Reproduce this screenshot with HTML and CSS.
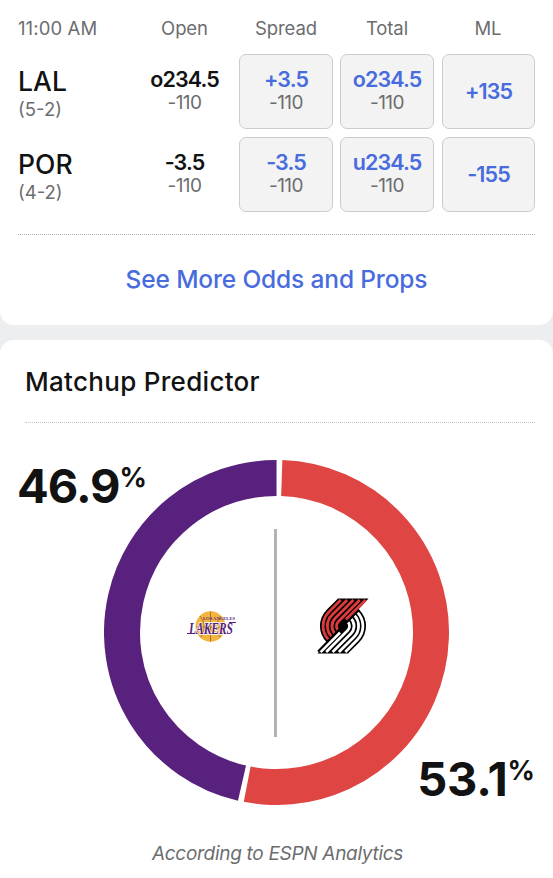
FILE: index.html
```html
<!doctype html>
<html lang="en">
<head>
<meta charset="utf-8">
<title>Matchup Predictor</title>
<link rel="stylesheet" href="styles.css">
</head>

<body>
<div class="card odds">
	<div class="odds_grid">
		<div class="head time">11:00 AM</div>
		<div class="head">Open</div>
		<div class="head">Spread</div>
		<div class="head">Total</div>
		<div class="head">ML</div>

		<div class="team"><b>LAL</b><span>(5-2)</span></div>
		<div class="cell"><b>o234.5</b><span>-110</span></div>
		<div class="cell btn"><b>+3.5</b><span>-110</span></div>
		<div class="cell btn"><b>o234.5</b><span>-110</span></div>
		<div class="cell btn ml"><b>+135</b></div>

		<div class="team"><b>POR</b><span>(4-2)</span></div>
		<div class="cell"><b>-3.5</b><span>-110</span></div>
		<div class="cell btn"><b>-3.5</b><span>-110</span></div>
		<div class="cell btn"><b>u234.5</b><span>-110</span></div>
		<div class="cell btn ml"><b>-155</b></div>
	</div>
	<a class="more">See More Odds and Props</a>
</div>

<div class="card predictor">
	<h2>Matchup Predictor</h2>
	<div class="chart">
		<svg class="ring" viewBox="0 0 345 345">
			<circle class="home" cx="172.5" cy="172.5" r="154.5" pathLength="360" stroke-dasharray="189 171" transform="rotate(-88.05 172.5 172.5)"/>
			<circle class="away" cx="172.5" cy="172.5" r="154.5" pathLength="360" stroke-dasharray="167.1 192.9" transform="rotate(102.9 172.5 172.5)"/>
			<path class="divider" d="M171.5 69v208"/>
			<!-- lakers -->
			<g transform="translate(82 148)">
				<ellipse class="ball" cx="24.5" cy="18.5" rx="15" ry="15.2"/>
				<path class="seams" d="M10 19h29M24.5 3.5v30M14 8q8 10 1 21M35 8q-8 10-1 21"/>
				<text class="la" x="17" y="12" textLength="32" lengthAdjust="spacingAndGlyphs">LOS ANGELES</text>
				<text class="lakers" x="3" y="25.5" textLength="44" lengthAdjust="spacingAndGlyphs">LAKERS</text>
				<path class="swoosh" d="M1 25.5h8M43 14.5h7"/>
			</g>
			<!-- blazers -->
			<g transform="translate(214 138)">
				<g id="half">
					<path d="M20 .5L8.7 11.7A23 23 0 0 0 8.7 44.3L25 28L50.5 .5z"/>
					<path class="stripes" d="M47.5 2L28 21.5M41.8 2L20.4 23.4A6.5 6.5 0 0 0 20.4 32.6M35.4 2L17.2 20.2A11 11 0 0 0 17.2 35.8M29.1 2L14 17A15.5 15.5 0 0 0 14 39M22.7 2L10.9 13.9A20 20 0 0 0 10.9 42.1"/>
					<path class="edge" d="M8.7 44.3L25 28"/>
				</g>
				<use class="lower" href="#half" transform="rotate(180 25 28)"/>
				<path class="edge" d="M0 53.500L25 28"/>
				<circle cx="25" cy="28" r="4.5"/>
			</g>
		</svg>
		<div class="pct pct_away">46.9<sup>%</sup></div>
		<div class="pct pct_home">53.1<sup>%</sup></div>
	</div>
	<p class="source">According to ESPN Analytics</p>
</div>
</body>
</html>
```

FILE: styles.css
```css
*{margin:0; padding:0; box-sizing:border-box;}
body{background:#edeef0; font-family:Inter, "Liberation Sans", sans-serif; color:#121213; height:878px; overflow:hidden;}
.card{background:#fff; border-radius:14px;}

.odds{height:325px; padding:0 18px; border-radius:0 0 14px 14px;}
.odds_grid{display:grid; grid-template-columns:112px 95px 94px 94px 94px; grid-template-rows:38px 75px 75px; column-gap:7px; row-gap:8px; height:235px; padding-top:8px; border-bottom:1px dotted #b0b1b3; text-align:center;}
.head{font-size:18.5px; line-height:41px; color:#6c6d6f; letter-spacing:-.1px;}
.time{text-align:left; letter-spacing:.1px;}
.team{text-align:left; padding-top:11px;}
.team b, .team span, .cell b, .cell span{display:block;}
.team b{font-size:26.5px; line-height:32px; font-weight:500; letter-spacing:.1px;}
.team span{font-size:18.5px; line-height:25px; color:#6c6d6f; letter-spacing:0;}
.cell{padding-top:12px;}
.cell b{font-size:21.5px; line-height:26px; font-weight:600; letter-spacing:-.9px;}
.cell span{font-size:19px; line-height:22px; color:#6c6d6f; letter-spacing:-.5px;}
.btn{background:#f3f3f4; border:1px solid #ccc; border-radius:7px; padding-top:11px;}
.btn b{color:#486cde;}
.ml{padding-top:23px; margin-left:1px;}
.more{display:block; text-align:center; font-size:24.5px; line-height:88px; font-weight:500; color:#486cde; letter-spacing:-.15px;}

.predictor{margin-top:15px; height:560px; padding:0 18px 0 25px;}
.odds + .predictor{margin-top:15px;}
.predictor h2{font-size:26px; line-height:84px; height:83px; font-weight:500; letter-spacing:.3px; border-bottom:1px dotted #c5c6c8;}
.chart{position:relative; margin:37px -18px 0 -25px; height:345px;}
.ring{display:block; width:345px; height:345px; margin-left:104px;}
.ring circle{stroke-width:36;}
.ring .home{fill:none; stroke:#df4643;}
.ring .away{fill:none; stroke:#57217d;}
.divider{stroke:#b3b3b3; stroke-width:3;}
.ball{fill:#f4b53f;}
.seams{fill:none; stroke:#8a6a30; stroke-width:.8;}
.la{font:bold 4px "Liberation Serif", serif; fill:#57217d;}
.lakers{font:italic bold 16px/1 "Liberation Serif", serif; fill:#57217d; stroke:#fff; stroke-width:1.5; paint-order:stroke;}
.swoosh{stroke:#57217d; stroke-width:1;}
.stripes{fill:none; stroke:var(--stripe, #df3a3c); stroke-width:2.8;}
.edge{stroke:#000; stroke-width:2;}
.lower{--stripe:#fff;}
.pct{position:absolute; font-size:47px; line-height:56px; font-weight:700; letter-spacing:-1px;}
.pct sup{font-size:27px; line-height:28px; vertical-align:top; position:relative; top:6px; font-weight:700; letter-spacing:0;}
.pct_away{left:17px; top:-2px;}
.pct_home{right:18px; top:291px; letter-spacing:-.2px;}
.source{text-align:center; font-size:19px; line-height:24px; margin-top:37px; font-style:italic; color:#6c6d6f; letter-spacing:-.3px; padding-right:5px;}
```
